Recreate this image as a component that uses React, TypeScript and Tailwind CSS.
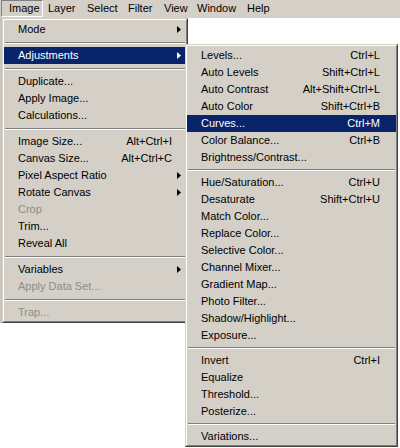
import React from "react";

type Entry =
    | { sep: true }
    | { label: string; shortcut?: string; sub?: boolean; disabled?: boolean; active?: boolean };

const imageMenu: Entry[] = [
    { label: "Mode", sub: true },
    { sep: true },
    { label: "Adjustments", sub: true, active: true },
    { sep: true },
    { label: "Duplicate..." },
    { label: "Apply Image..." },
    { label: "Calculations..." },
    { sep: true },
    { label: "Image Size...", shortcut: "Alt+Ctrl+I" },
    { label: "Canvas Size...", shortcut: "Alt+Ctrl+C" },
    { label: "Pixel Aspect Ratio", sub: true },
    { label: "Rotate Canvas", sub: true },
    { label: "Crop", disabled: true },
    { label: "Trim..." },
    { label: "Reveal All" },
    { sep: true },
    { label: "Variables", sub: true },
    { label: "Apply Data Set...", disabled: true },
    { sep: true },
    { label: "Trap...", disabled: true },
];

const adjustMenu: Entry[] = [
    { label: "Levels...", shortcut: "Ctrl+L" },
    { label: "Auto Levels", shortcut: "Shift+Ctrl+L" },
    { label: "Auto Contrast", shortcut: "Alt+Shift+Ctrl+L" },
    { label: "Auto Color", shortcut: "Shift+Ctrl+B" },
    { label: "Curves...", shortcut: "Ctrl+M", active: true },
    { label: "Color Balance...", shortcut: "Ctrl+B" },
    { label: "Brightness/Contrast..." },
    { sep: true },
    { label: "Hue/Saturation...", shortcut: "Ctrl+U" },
    { label: "Desaturate", shortcut: "Shift+Ctrl+U" },
    { label: "Match Color..." },
    { label: "Replace Color..." },
    { label: "Selective Color..." },
    { label: "Channel Mixer..." },
    { label: "Gradient Map..." },
    { label: "Photo Filter..." },
    { label: "Shadow/Highlight..." },
    { label: "Exposure..." },
    { sep: true },
    { label: "Invert", shortcut: "Ctrl+I" },
    { label: "Equalize" },
    { label: "Threshold..." },
    { label: "Posterize..." },
    { sep: true },
    { label: "Variations..." },
];

const barItems = [
    { label: "Image", cls: "w-[42px] pl-[7px]", pressed: true },
    { label: "Layer", cls: "w-[39px] pl-[5px]" },
    { label: "Select", cls: "w-[41px] pl-[5px]" },
    { label: "Filter", cls: "w-[36px] pl-[5px]" },
    { label: "View", cls: "w-[33px] pl-[5px]" },
    { label: "Window", cls: "w-[50px] pl-[5px]" },
    { label: "Help", cls: "w-[40px] pl-[5px]" },
];

function Arrow({ white }: { white?: boolean }) {
    return (
        <svg width="4" height="7" viewBox="0 0 4 7">
            <path d="M0 0 L4 3.5 L0 7 Z" fill={white ? "#ffffff" : "#000000"} />
        </svg>
    );
}

function PopupMenu({ items, sepClass, slotClass }: { items: Entry[]; sepClass: string; slotClass: string }) {
    return (
        <div className="border border-t-[#d4d0c8] border-l-[#d4d0c8] border-r-[#404040] border-b-[#404040] bg-[#d4d0c8]">
            <div className="border border-t-white border-l-white border-r-[#808080] border-b-[#808080] pt-[1px]">
                {items.map((it, i) =>
                    "sep" in it ? (
                        <div key={i} className={`${sepClass} flex flex-col justify-center px-[1px]`}>
                            <div className="border-t border-t-[#808080] border-b border-b-white" />
                        </div>
                    ) : (
                        <div
                            key={i}
                            className={`h-[17px] flex items-center pl-[14px] whitespace-nowrap ${
                                it.active ? "bg-[#0a246a] text-white" : it.disabled ? "text-[#8f8c87]" : "text-black"
                            }`}
                        >
                            <span className="flex-1 leading-none">{it.label}</span>
                            {it.shortcut && <span className="leading-none">{it.shortcut}</span>}
                            <span className={`${slotClass} flex justify-end pr-[5px]`}>
                                {it.sub && <Arrow white={it.active} />}
                            </span>
                        </div>
                    )
                )}
            </div>
        </div>
    );
}

export default function App() {
    return (
        <div className="relative w-[400px] h-[448px] overflow-hidden bg-white font-['Liberation_Sans',Arial,sans-serif] text-[11px] text-black">
            <div className="flex h-[18px] bg-[#d4d0c8] pl-[1px] items-start">
                {barItems.map((b) => (
                    <div
                        key={b.label}
                        className={`${b.cls} h-[17px] flex items-center leading-none ${
                            b.pressed ? "border border-t-[#808080] border-l-[#808080] border-r-white border-b-white pl-[6px]" : ""
                        }`}
                    >
                        {b.label}
                    </div>
                ))}
            </div>
            <div className="w-[2px] h-[305px] bg-[#c9c5bd]" />

            <div className="absolute left-[2px] top-[18px] w-[186px]">
                <PopupMenu items={imageMenu} sepClass="h-[9px]" slotClass="w-[14px]" />
            </div>
            <div className="absolute left-[185px] top-[44px] w-[213px]">
                <PopupMenu items={adjustMenu} sepClass="h-[8px]" slotClass="w-[16px]" />
            </div>
        </div>
    );
}
